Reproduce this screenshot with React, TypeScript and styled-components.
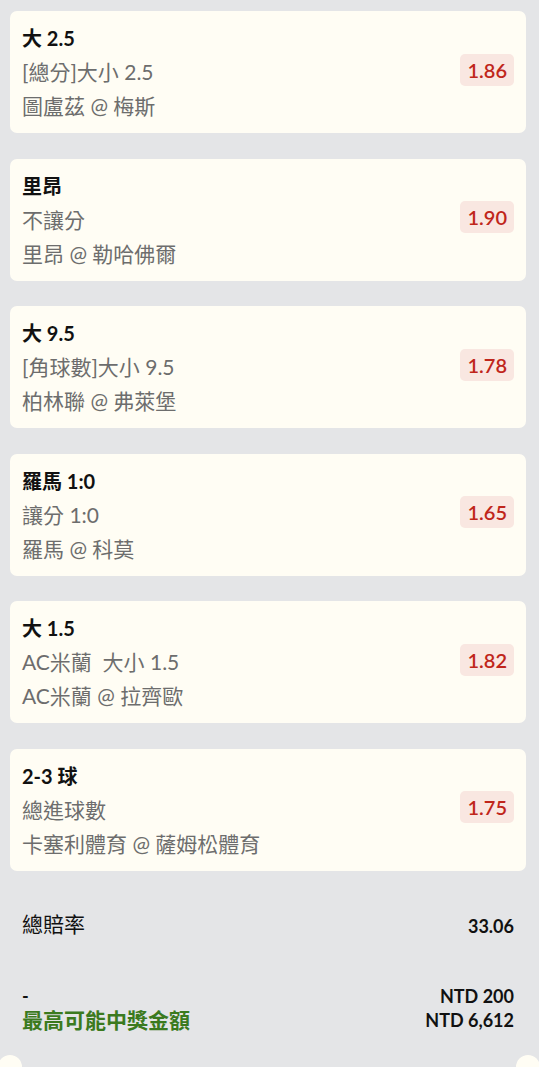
import React from "react";
import styled, { createGlobalStyle } from "styled-components";

const GlobalStyle = createGlobalStyle`
  html, body {
    margin: 0;
    padding: 0;
    background: #e4e5e7;
  }
  body {
    font-family: Lato, "Noto Sans CJK TC", sans-serif;
  }
`;

const Page = styled.div`
  position: relative;
  height: 1067px;
  overflow: hidden;
  padding: 11px 13px 0 10px;
  box-sizing: border-box;
`;

const CardList = styled.div`
  display: flex;
  flex-direction: column;
  gap: 25.5px;
`;

const Card = styled.div`
  display: flex;
  align-items: center;
  justify-content: space-between;
  height: 122px;
  box-sizing: border-box;
  background: #fffdf4;
  border-radius: 7px;
  padding: 1px 12px 0;
`;

const Info = styled.div`
  display: flex;
  flex-direction: column;
`;

const Title = styled.div`
  font-size: 20px;
  font-weight: 700;
  line-height: 33px;
  color: #111;
`;

const Line = styled.div`
  font-size: 21px;
  line-height: 34px;
  color: #6d6d6d;
  white-space: pre;
`;

const Odds = styled.div`
  background: #f9e7e1;
  color: #c0261b;
  border-radius: 5px;
  font-size: 20px;
  font-weight: 600;
  line-height: 32px;
  padding: 0 7px;
  margin-bottom: 6px;
`;

const Summary = styled.div`
  display: flex;
  flex-direction: column;
  padding: 0 12px;
`;

const Row = styled.div<{ $top: number }>`
  display: flex;
  justify-content: space-between;
  align-items: flex-end;
  margin-top: ${(p) => p.$top}px;
`;

const Label = styled.div`
  font-size: 21px;
  line-height: 28px;
  color: #111;
`;

const Value = styled.div`
  font-size: 18px;
  font-weight: 700;
  line-height: 24px;
  color: #111;
  text-align: right;
`;

const Stack = styled.div`
  display: flex;
  flex-direction: column;
`;

const Dash = styled.div`
  font-size: 18px;
  font-weight: 700;
  line-height: 24px;
  color: #111;
`;

const Prize = styled.div`
  font-size: 21px;
  font-weight: 700;
  line-height: 24px;
  color: #3b7a1e;
`;

const Notch = styled.div<{ $side: "left" | "right" }>`
  position: absolute;
  top: 1055px;
  ${(p) => (p.$side === "left" ? "left: -2px;" : "right: -1px;")}
  width: 24px;
  height: 24px;
  border-radius: 50%;
  background: #fffdf4;
`;

const bets = [
  { title: "大 2.5", market: "[總分]大小 2.5", match: "圖盧茲 @ 梅斯", odds: "1.86" },
  { title: "里昂", market: "不讓分", match: "里昂 @ 勒哈佛爾", odds: "1.90" },
  { title: "大 9.5", market: "[角球數]大小 9.5", match: "柏林聯 @ 弗萊堡", odds: "1.78" },
  { title: "羅馬 1:0", market: "讓分 1:0", match: "羅馬 @ 科莫", odds: "1.65" },
  { title: "大 1.5", market: "AC米蘭  大小 1.5", match: "AC米蘭 @ 拉齊歐", odds: "1.82" },
  { title: "2-3 球", market: "總進球數", match: "卡塞利體育 @ 薩姆松體育", odds: "1.75" },
];

export default function App() {
  return (
    <>
      <GlobalStyle />
      <Page>
        <CardList>
          {bets.map((b) => (
            <Card key={b.title}>
              <Info>
                <Title>{b.title}</Title>
                <Line>{b.market}</Line>
                <Line>{b.match}</Line>
              </Info>
              <Odds>{b.odds}</Odds>
            </Card>
          ))}
        </CardList>
        <Summary>
          <Row $top={39}>
            <Label>總賠率</Label>
            <Value>33.06</Value>
          </Row>
          <Row $top={46}>
            <Stack>
              <Dash>-</Dash>
              <Prize>最高可能中獎金額</Prize>
            </Stack>
            <Stack>
              <Value>NTD 200</Value>
              <Value>NTD 6,612</Value>
            </Stack>
          </Row>
        </Summary>
        <Notch $side="left" />
        <Notch $side="right" />
      </Page>
    </>
  );
}
